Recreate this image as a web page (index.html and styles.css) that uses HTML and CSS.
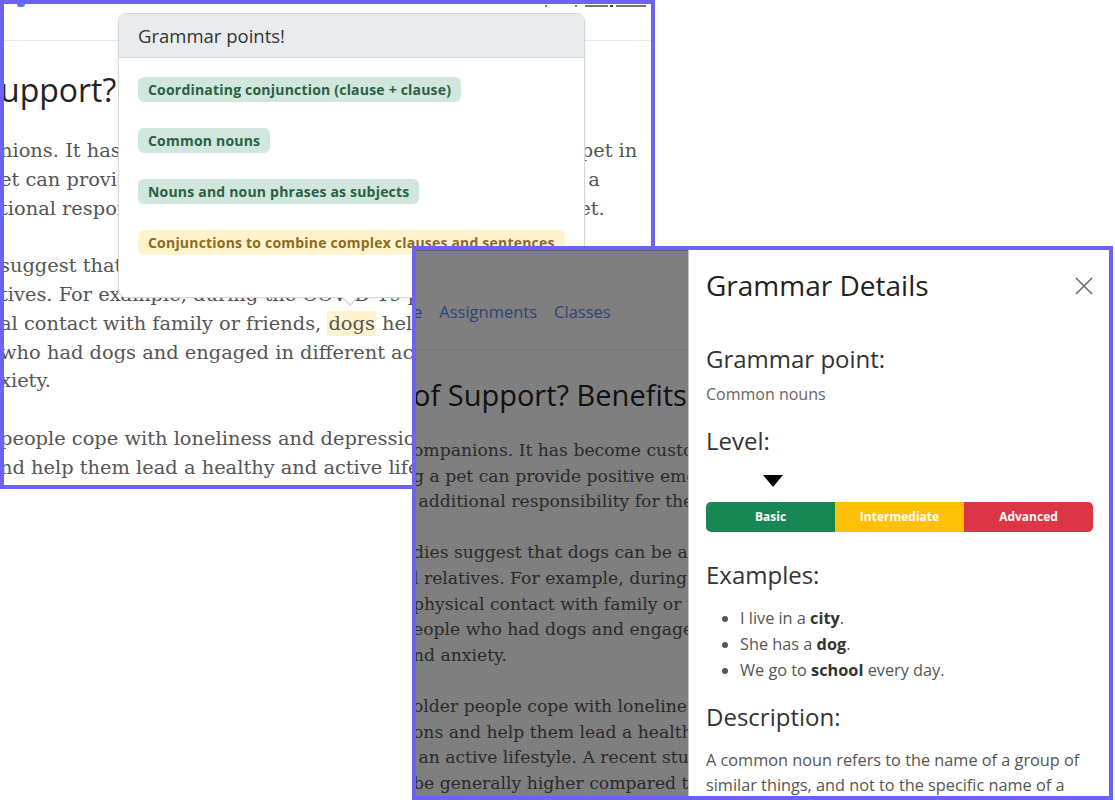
FILE: index.html
```html
<!DOCTYPE html>
<html lang="en">
<head>
    <meta charset="UTF-8">
    <meta name="viewport" content="width=device-width, initial-scale=1.0">
    <title>Grammar points</title>
    <link rel="stylesheet" href="styles.css">
</head>
<body>

    <!-- shot 1: article with the grammar popover -->
    <div class="shot shot-article">
        <div class="navbar">
            <span class="logo-tip"></span>
            <div class="nav-tail">
                <i class="tick"></i>
                <i class="tick t2"></i>
                <i class="line l1"></i>
                <i class="tick t3"></i>
                <i class="line l2"></i>
            </div>
        </div>

        <div class="article">
            <h1>upport?</h1>
            <p>
                <span class="ln">nions. It has become customary for many people to keep a pet in</span>
                <span class="ln">et can provide positive emotions and companionship, yet is a</span>
                <span class="ln">tional responsibility for the owner and the family of their pet.</span>
            </p>
            <p>
                <span class="ln">suggest that dogs can be a source of support</span>
                <span class="ln">tives. For example, during the COVID-19 pandemic</span>
                <span class="ln">al contact with family or friends, <span class="hl">dogs</span> helped</span>
                <span class="ln">who had dogs and engaged in different activities</span>
                <span class="ln">xiety.</span>
            </p>
            <p>
                <span class="ln">people cope with loneliness and depression</span>
                <span class="ln">nd help them lead a healthy and active lifestyle</span>
            </p>
        </div>

        <div class="popover">
            <div class="popover-header">Grammar points!</div>
            <div class="popover-body">
                <span class="badge badge-green">Coordinating conjunction (clause + clause)</span>
                <span class="badge badge-green">Common nouns</span>
                <span class="badge badge-green">Nouns and noun phrases as subjects</span>
                <span class="badge badge-yellow">Conjunctions to combine complex clauses and sentences</span>
            </div>
            <span class="popover-arrow"></span>
        </div>
    </div>

    <!-- shot 2: grammar details offcanvas -->
    <div class="shot shot-modal">
        <div class="page">
            <div class="navbar2">
                <a href="#">e</a>
                <a href="#">Assignments</a>
                <a href="#">Classes</a>
            </div>
            <div class="article2">
                <h1>of Support? Benefits of Having a Dog</h1>
                <p>
                    <span class="ln">ompanions. It has become customary to keep a pet in</span>
                    <span class="ln">g a pet can provide positive emotions and</span>
                    <span class="ln">&nbsp;additional responsibility for the owner.</span>
                </p>
                <p>
                    <span class="ln">dies suggest that dogs can be a source of</span>
                    <span class="ln">l relatives. For example, during the pandemic</span>
                    <span class="ln">physical contact with family or friends, dogs</span>
                    <span class="ln">eople who had dogs and engaged in different</span>
                    <span class="ln">nd anxiety.</span>
                </p>
                <p>
                    <span class="ln">older people cope with loneliness and</span>
                    <span class="ln">ons and help them lead a healthy and</span>
                    <span class="ln">&nbsp;an active lifestyle. A recent study</span>
                    <span class="ln">be generally higher compared to people</span>
                </p>
            </div>
        </div>
        <div class="backdrop"></div>

        <aside class="offcanvas">
            <div class="offcanvas-header">
                <h2>Grammar Details</h2>
                <button class="btn-close" type="button">
                    <svg width="18" height="18" viewBox="0 0 18 18">
                        <path d="M1 1 L17 17 M17 1 L1 17" stroke="#6b6b6b" stroke-width="1.6" fill="none"/>
                    </svg>
                </button>
            </div>
            <div class="offcanvas-body">
                <h3 class="gp-title">Grammar point:</h3>
                <div class="gp-name">Common nouns</div>

                <h3 class="level-title">Level:</h3>
                <div class="level-pointer"></div>
                <div class="level-bar">
                    <span class="lv lv-basic">Basic</span>
                    <span class="lv lv-mid">Intermediate</span>
                    <span class="lv lv-adv">Advanced</span>
                </div>

                <h3 class="ex-title">Examples:</h3>
                <ul class="examples">
                    <li>I live in a <b>city</b>.</li>
                    <li>She has a <b>dog</b>.</li>
                    <li>We go to <b>school</b> every day.</li>
                </ul>

                <h3 class="desc-title">Description:</h3>
                <p class="desc">A common noun refers to the name of a group of similar things, and not to the specific name of a</p>
            </div>
        </aside>
    </div>

</body>
</html>
```

FILE: styles.css
```css
body {
    margin: 0;
    padding: 0;
    width: 1115px;
    height: 800px;
    position: relative;
    overflow: hidden;
    background-color: #fff;
    font-family: "Open Sans", Arial, sans-serif;
    color: #333;
}

.shot {
    position: absolute;
    box-sizing: border-box;
    border: 4px solid #6c63f5;
    background-color: #fff;
    overflow: hidden;
}
.shot-article {
    left: 0;
    top: 0;
    width: 655px;
    height: 489px;
}
.shot-modal {
    left: 412px;
    top: 246px;
    width: 701px;
    height: 554px;
}

/* shot 1 */
.navbar {
    height: 36px;
    border-bottom: 1px solid #ebebeb;
    display: flex;
    justify-content: space-between;
    align-items: flex-start;
}
.logo-tip {
    display: block;
    width: 8px;
    height: 3px;
    margin-left: 13px;
    background-color: #4f7cf3;
    border-radius: 0 0 4px 4px;
}
.nav-tail {
    display: flex;
    align-items: flex-start;
    margin-right: 5px;
    padding-top: 1px;
}
.nav-tail i {
    display: block;
    height: 2px;
    background-color: #777;
}
.nav-tail .tick { width: 2px; }
.nav-tail .t2 { margin-left: 28px; }
.nav-tail .l1 { width: 23px; margin-left: 8px; }
.nav-tail .t3 { width: 3px; margin-left: 2px; background-color: #444; }
.nav-tail .l2 { width: 30px; margin-left: 3px; }

.article {
    margin-left: -4px;
    white-space: nowrap;
}
.article h1 {
    margin: 30px 0 0;
    font-size: 32px;
    font-weight: 400;
    line-height: 37px;
    color: #222;
}
.article p {
    margin: 29px 0 0;
    font-family: "DejaVu Serif", Georgia, serif;
    font-size: 19.4px;
    line-height: 28.8px;
    color: #555;
}
.article p + p {
    margin-top: 28.8px;
}
.ln {
    display: block;
}
.hl {
    background-color: #fff3cd;
    padding: 1px 1px;
}

.popover {
    position: absolute;
    left: 114px;
    top: 9px;
    width: 467px;
    box-sizing: border-box;
    background-color: #fff;
    border: 1px solid #d6d6d6;
    border-radius: 8px;
    box-shadow: 0 2px 6px rgba(0, 0, 0, 0.05);
}
.popover-header {
    height: 43px;
    line-height: 43px;
    padding: 0 19px;
    background-color: #e9ecef;
    border-bottom: 1px solid #d3d6d9;
    border-radius: 7px 7px 0 0;
    font-size: 18.5px;
    color: #333;
}
.popover-body {
    padding: 19px 19px 42px;
    display: flex;
    flex-direction: column;
    align-items: flex-start;
    gap: 26px;
}
.badge {
    display: block;
    height: 25px;
    line-height: 25px;
    padding: 0 10px;
    border-radius: 6px;
    font-size: 14px;
    font-weight: 700;
    letter-spacing: 0.2px;
    white-space: nowrap;
}
.badge-green {
    background-color: #d1e7dd;
    color: #2a6141;
}
.badge-yellow {
    background-color: #fff3cd;
    color: #8c6b1f;
}
.popover-arrow {
    position: absolute;
    left: 222px;
    bottom: -9px;
    width: 0;
    height: 0;
    border-left: 9px solid transparent;
    border-right: 9px solid transparent;
    border-top: 9px solid #d6d6d6;
}
.popover-arrow::after {
    content: "";
    position: absolute;
    left: -8px;
    top: -10px;
    border-left: 8px solid transparent;
    border-right: 8px solid transparent;
    border-top: 8px solid #fff;
}

/* shot 2 */
.page {
    width: 272px;
    overflow: hidden;
    border-top: 1px solid #c8c8c8;
    white-space: nowrap;
}
.navbar2 {
    height: 99px;
    box-sizing: border-box;
    border-bottom: 1px solid #ececec;
    display: flex;
    align-items: flex-end;
    gap: 17px;
    padding-bottom: 26px;
    margin-left: -3px;
}
.navbar2 a {
    font-size: 16.5px;
    line-height: 22px;
    color: #5b88f5;
    text-decoration: none;
}
.article2 {
    margin-left: -3px;
}
.article2 h1 {
    margin: 28px 0 0;
    font-size: 29px;
    font-weight: 400;
    line-height: 34px;
    color: #222;
}
.article2 p {
    margin: 26px 0 0;
    font-family: "DejaVu Serif", Georgia, serif;
    font-size: 17.2px;
    line-height: 25.6px;
    color: #555;
}
.article2 p + p {
    margin-top: 25.6px;
}
.backdrop {
    position: absolute;
    left: 0;
    top: 0;
    right: 0;
    bottom: 0;
    background-color: rgba(0, 0, 0, 0.5);
}

.offcanvas {
    position: absolute;
    top: 0;
    right: 0;
    bottom: 0;
    width: 421px;
    box-sizing: border-box;
    background-color: #fff;
    border-left: 1px solid #c4c4c4;
    padding: 0 16px 0 17px;
    color: #555;
}
.offcanvas-header {
    display: flex;
    justify-content: space-between;
    align-items: center;
    padding-top: 18px;
}
.offcanvas-header h2 {
    margin: 0;
    font-size: 28px;
    font-weight: 400;
    line-height: 34px;
    color: #222;
}
.btn-close {
    border: none;
    background: none;
    padding: 0;
    width: 18px;
    height: 18px;
    margin-top: 2px;
    cursor: pointer;
}
.offcanvas-body h3 {
    margin: 0;
    font-size: 24px;
    font-weight: 400;
    line-height: 29px;
    color: #333;
}
.gp-title {
    padding-top: 42px;
}
.gp-name {
    margin-top: 10px;
    font-size: 16px;
    line-height: 22px;
    color: #666;
}
.offcanvas-body .level-title {
    margin-top: 21px;
}
.level-pointer {
    width: 0;
    height: 0;
    margin: 20px 0 0 57px;
    border-left: 10px solid transparent;
    border-right: 10px solid transparent;
    border-top: 12px solid #000;
}
.level-bar {
    display: flex;
    margin-top: 15px;
    height: 30px;
    border-radius: 5px;
    overflow: hidden;
}
.lv {
    flex: 1;
    text-align: center;
    line-height: 30px;
    font-size: 12px;
    font-weight: 700;
    color: #fff;
}
.lv-basic { background-color: #198754; }
.lv-mid { background-color: #ffc107; }
.lv-adv { background-color: #dc3545; }

.offcanvas-body .ex-title {
    margin-top: 28px;
}
.examples {
    margin: 16px 0 0;
    padding-left: 34px;
    font-size: 16.3px;
    line-height: 26px;
    color: #555;
}
.examples b {
    color: #333;
}
.offcanvas-body .desc-title {
    margin-top: 19px;
}
.desc {
    margin: 17px 0 0;
    font-size: 16.3px;
    line-height: 25px;
    color: #555;
}
```
